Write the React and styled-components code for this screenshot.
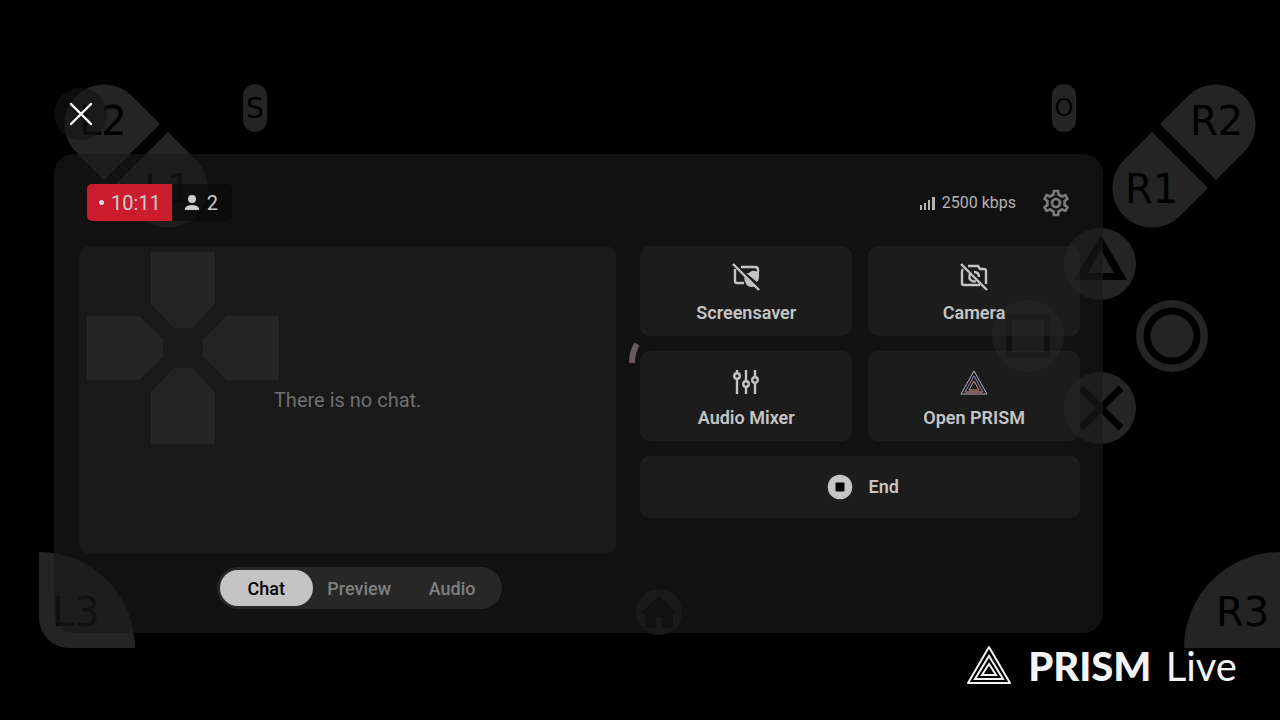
import React, { useState } from "react";
import styled, { createGlobalStyle, css } from "styled-components";
import { MdOutlineSettings } from "react-icons/md";

const GlobalStyle = createGlobalStyle`
  * {
    box-sizing: border-box;
  }
  body {
    margin: 0;
    background: #000;
    font-family: Roboto, "Liberation Sans", sans-serif;
  }
  button {
    margin: 0;
    padding: 0;
    border: 0;
    background: none;
    color: inherit;
    font: inherit;
    cursor: pointer;
  }
  svg {
    display: block;
  }
`;

const Screen = styled.div`
  position: relative;
  min-height: 100vh;
  overflow: hidden;
  background: #000;
`;

/* on-screen gamepad, floats freely behind the panel */

const PadButton = styled.button`
  position: absolute;
  top: ${({ $top }) => $top}px;
  ${({ $left }) => $left !== undefined && css`left: ${$left}px;`}
  ${({ $right }) => $right !== undefined && css`right: ${$right}px;`}
  color: #242424;
  opacity: ${({ $faint }) => ($faint ? 0.7 : 1)};
`;

const PadSvg = styled.svg`
  fill: currentColor;
  text {
    font-family: "DejaVu Sans", sans-serif;
    font-size: 40px;
    fill: #000;
  }
`;

const PillButton = styled(PadButton)`
  display: flex;
  align-items: center;
  justify-content: center;
  width: 24px;
  height: 48px;
  border-radius: 12px;
  background: #242424;
  color: #000;
  font-family: "DejaVu Sans", sans-serif;
  font-size: ${({ $size }) => $size}px;
`;

const Content = styled.div`
  position: relative;
  padding: 88px 0 0 54px;
`;

const CloseButton = styled.button`
  display: flex;
  align-items: center;
  justify-content: center;
  width: 53px;
  height: 52px;
  border-radius: 50%;
  background: rgba(20, 20, 20, 0.6);
`;

const Panel = styled.main`
  margin: 14px 177px 0 0;
  padding: 30px 23px 24px 25px;
  border-radius: 20px;
  background: rgba(26, 26, 26, 0.66);
`;

const Toolbar = styled.header`
  display: flex;
  align-items: center;
  justify-content: space-between;
  padding: 0 8px;
  margin-bottom: 25px;
`;

const Status = styled.div`
  display: flex;
  height: 37px;
  overflow: hidden;
  border-radius: 5px;
  color: #ccc;
  font-size: 20px;
`;

const LiveTime = styled.div`
  display: flex;
  align-items: center;
  gap: 7px;
  padding: 0 11px 0 12px;
  background: rgba(214, 30, 48, 0.95);
`;

const Dot = styled.span`
  width: 5px;
  height: 5px;
  border-radius: 50%;
  background: #ddd;
`;

const Viewers = styled.div`
  display: flex;
  align-items: center;
  gap: 7px;
  padding: 0 14px 0 12px;
  background: rgba(8, 8, 10, 0.6);
`;

const Tools = styled.div`
  display: flex;
  align-items: center;
  gap: 24px;
`;

const Bitrate = styled.div`
  display: flex;
  align-items: center;
  gap: 6px;
  color: #b4b4b4;
  font-size: 16px;
`;

const SettingsButton = styled.button`
  color: #7a7a7a;
`;

const Columns = styled.div`
  display: grid;
  grid-template-columns: 11fr 9fr;
  gap: 24px;
  align-items: start;
`;

const ChatColumn = styled.section`
  display: flex;
  flex-direction: column;
  align-items: center;
  gap: 13px;
`;

const ChatBox = styled.div`
  display: flex;
  align-items: center;
  justify-content: center;
  width: 100%;
  min-height: 308px;
  border-radius: 10px;
  background: rgba(255, 255, 255, 0.035);
  color: #6f6f6f;
  font-size: 20px;
`;

const Tabs = styled.div`
  display: flex;
  margin-left: 23px;
  padding: 3px;
  border-radius: 21px;
  background: #272727;
`;

const Tab = styled.button`
  width: 93px;
  height: 36px;
  border-radius: 18px;
  background: ${({ $active }) => ($active ? "#c4c4c4" : "transparent")};
  color: ${({ $active }) => ($active ? "#000" : "#808080")};
  font-size: 18px;
  font-weight: 500;
`;

const Actions = styled.section`
  display: grid;
  grid-template-columns: 1fr 1fr;
  gap: 15px 16px;
`;

const ActionButton = styled.button`
  display: flex;
  flex-direction: column;
  align-items: center;
  gap: 11px;
  padding: 17px 8px 12px;
  border-radius: 10px;
  background: rgba(40, 40, 40, 0.5);
  color: #c4c4c4;
  font-size: 18px;
  font-weight: 600;
  line-height: 22px;
  ${({ $wide }) =>
    $wide &&
    css`
      grid-column: 1 / -1;
      flex-direction: row;
      justify-content: center;
      gap: 15px;
      padding: 18px 8px 18px 14px;
    `}
`;

const Spinner = styled.svg`
  position: absolute;
  top: 342px;
  left: 628px;
`;

const Brand = styled.footer`
  display: flex;
  align-items: center;
  justify-content: flex-end;
  gap: 16px;
  padding: 9px 43px 0 0;
  color: #f4f4f4;
  font-family: Lato, "Open Sans", sans-serif;
  font-size: 40px;
  line-height: 48px;
`;

const BrandName = styled.span`
  strong {
    margin-right: 4px;
    font-weight: 900;
  }
`;

const shoulders = [
  { label: "L2", left: 64, top: 84, x: 15, y: 51, d: "M96 40 40 96 12 68A39 39 0 0 1 68 12Z" },
  { label: "L1", left: 112, top: 132, x: 32, y: 71, d: "M56 0 84 28A39 39 0 0 1 28 84L0 56Z" },
  { label: "R2", right: 24, top: 84, x: 30, y: 51, d: "M0 40 28 12A39 39 0 0 1 84 68L56 96Z" },
  { label: "R1", right: 72, top: 132, x: 13, y: 71, d: "M40 0 96 56 68 84A39 39 0 0 1 12 28Z" },
  { label: "L3", left: 39, top: 552, x: 13, y: 74, d: "M0 0A96 96 0 0 1 96 96H30A30 30 0 0 1 0 66Z" },
  { label: "R3", right: 0, top: 552, x: 32, y: 74, d: "M0 96A96 96 0 0 1 96 0V96Z" },
];

const directions = [
  { name: "Up", left: 151, top: 252, w: 64, h: 76, d: "M0 0h64v52L41 76H23L0 52z" },
  { name: "Left", left: 87, top: 316, w: 76, h: 64, d: "M0 0h52L76 23v18L52 64H0z" },
  { name: "Right", left: 203, top: 316, w: 76, h: 64, d: "M76 0v64H24L0 41V23L24 0z" },
  { name: "Down", left: 151, top: 368, w: 64, h: 76, d: "M0 76h64V24L41 0H23L0 24z" },
];

const faces = [
  { name: "Triangle", right: 144, top: 228, shape: <path fill="#000" fillRule="evenodd" d="M37 7 63 52H10ZM37 22 24 45H50Z" /> },
  { name: "Square", right: 216, top: 300, shape: <path fill="none" stroke="#000" strokeWidth="6" d="M17 17h38v38H17z" /> },
  { name: "Circle", right: 72, top: 300, shape: <circle cx="36" cy="36" r="25" fill="none" stroke="#000" strokeWidth="7" /> },
  { name: "Cross", right: 144, top: 372, shape: <path fill="none" stroke="#000" strokeWidth="7" d="M17 16 57 56M57 16 17 56" /> },
];

const Gamepad = () => (
  <>
    {shoulders.map(({ label, left, right, top, x, y, d }) => (
      <PadButton key={label} $left={left} $right={right} $top={top}>
        <PadSvg width="96" height="96">
          <path d={d} />
          <text x={x} y={y}>{label}</text>
        </PadSvg>
      </PadButton>
    ))}
    <PillButton $left={243} $top={84} $size={28}>S</PillButton>
    <PillButton $right={204} $top={84} $size={24}>O</PillButton>
    {directions.map(({ name, left, top, w, h, d }) => (
      <PadButton key={name} aria-label={name} $left={left} $top={top}>
        <PadSvg width={w} height={h}>
          <path d={d} />
        </PadSvg>
      </PadButton>
    ))}
    {faces.map(({ name, right, top, shape }) => (
      <PadButton key={name} aria-label={name} $right={right} $top={top}>
        <PadSvg width="72" height="72">
          <circle cx="36" cy="36" r="36" />
          {shape}
        </PadSvg>
      </PadButton>
    ))}
    <PadButton aria-label="Home" $left={635} $top={588} $faint>
      <PadSvg width="48" height="48">
        <circle cx="24" cy="24" r="23" />
        <path fill="#000" d="M24 8 43 25H38V40H27V29H21V40H10V25H5Z" />
      </PadSvg>
    </PadButton>
  </>
);

const ScreensaverIcon = () => (
  <svg width="28" height="28" viewBox="0 0 28 28" fill="none" stroke="currentColor" strokeWidth="2.4">
    <path d="M9 4h14q3 0 3 3v2M3 6v12q0 2 2 2h7" />
    <path d="M14 10q2 1 4-1 3-2 5-1 3 1 4 1v5q0 3-2 5zM12 14q1 10 8 10 2 0 3-1z" fill="currentColor" stroke="none" />
    <path d="M1 1 27 27" />
  </svg>
);

const CameraIcon = () => (
  <svg width="28" height="28" viewBox="0 0 28 28" fill="none" stroke="currentColor" strokeWidth="2.4">
    <path d="M8 3h10l2 3h4q2 0 2 2v13M3 6q-1 1-1 3v11q0 2 2 2h16" />
    <path d="M14 9q5 0 5 5M10 11q-2 5 2 7 2 1 4 0" />
    <path d="M1 1 27 27" />
  </svg>
);

const MixerIcon = () => (
  <svg width="28" height="28" viewBox="0 0 28 28" fill="none" stroke="currentColor" strokeWidth="2.4">
    <path d="M5 2v3M5 11v15M14 2v11M14 19v7M23 2v8M23 16v10" />
    <circle cx="5" cy="8" r="2.8" />
    <circle cx="14" cy="16" r="2.8" />
    <circle cx="23" cy="12" r="2.8" />
  </svg>
);

const PrismIcon = () => (
  <svg width="28" height="28" viewBox="0 0 28 28" fill="none">
    <path d="M14 3 27 26H1Z" stroke="#b9b4bd" />
    <path d="M14 8 23 24H5Z" stroke="#8f86b8" />
    <path d="M14 13 19 22H9Z" stroke="#c9a08c" />
    <path d="M6 24h16" stroke="#b06a48" />
  </svg>
);

const StopIcon = () => (
  <svg width="26" height="26" viewBox="0 0 26 26">
    <circle cx="13" cy="13" r="12.3" fill="currentColor" />
    <rect x="8.5" y="8.5" width="9" height="9" rx="1" fill="#000" />
  </svg>
);

const SignalIcon = () => (
  <svg width="16" height="14" viewBox="0 0 16 14" fill="currentColor">
    <path d="M0 9h2v5H0zM4 7h2v7H4zM8 4h2v10H8zM12 1h3v13h-3z" />
  </svg>
);

const PersonIcon = () => (
  <svg width="16" height="16" viewBox="0 0 16 16" fill="currentColor">
    <circle cx="8" cy="4" r="4" />
    <path d="M1 15v-2q2-3 7-3t7 3v2z" />
  </svg>
);

const BrandIcon = () => (
  <svg width="46" height="44" viewBox="0 0 46 44" fill="none" stroke="currentColor" strokeWidth="2">
    <path d="M23 3 44 39H2Z" strokeLinejoin="round" />
    <path d="M23 12 37 35H9Z" />
    <path d="M23 20 30 31H16Z" />
  </svg>
);

const actions = [
  { label: "Screensaver", icon: <ScreensaverIcon /> },
  { label: "Camera", icon: <CameraIcon /> },
  { label: "Audio Mixer", icon: <MixerIcon /> },
  { label: "Open PRISM", icon: <PrismIcon /> },
  { label: "End", icon: <StopIcon />, wide: true },
];

const App = () => {
  const [activeTab, setActiveTab] = useState("Chat");

  return (
    <Screen>
      <GlobalStyle />
      <Gamepad />
      <Content>
        <CloseButton aria-label="Close">
          <svg width="24" height="24" fill="none" stroke="#fff" strokeWidth="2.4" strokeLinecap="round">
            <path d="M2 2 22 22M22 2 2 22" />
          </svg>
        </CloseButton>
        <Panel>
          <Toolbar>
            <Status>
              <LiveTime>
                <Dot />
                10:11
              </LiveTime>
              <Viewers>
                <PersonIcon />2
              </Viewers>
            </Status>
            <Tools>
              <Bitrate>
                <SignalIcon />
                2500 kbps
              </Bitrate>
              <SettingsButton aria-label="Settings">
                <MdOutlineSettings size={32} />
              </SettingsButton>
            </Tools>
          </Toolbar>
          <Columns>
            <ChatColumn>
              <ChatBox>There is no chat.</ChatBox>
              <Tabs role="tablist">
                {["Chat", "Preview", "Audio"].map((tab) => (
                  <Tab
                    key={tab}
                    role="tab"
                    aria-selected={tab === activeTab}
                    $active={tab === activeTab}
                    onClick={() => setActiveTab(tab)}
                  >
                    {tab}
                  </Tab>
                ))}
              </Tabs>
            </ChatColumn>
            <Actions>
              {actions.map(({ label, icon, wide }) => (
                <ActionButton key={label} $wide={wide}>
                  {icon}
                  {label}
                </ActionButton>
              ))}
            </Actions>
          </Columns>
        </Panel>
        <Brand>
          <BrandIcon />
          <BrandName>
            <strong>PRISM</strong> Live
          </BrandName>
        </Brand>
      </Content>
      <Spinner width="12" height="22" fill="none" stroke="#6b5862" strokeWidth="6">
        <path d="M9 2Q4 10 4 21" />
      </Spinner>
    </Screen>
  );
};

export default App;
